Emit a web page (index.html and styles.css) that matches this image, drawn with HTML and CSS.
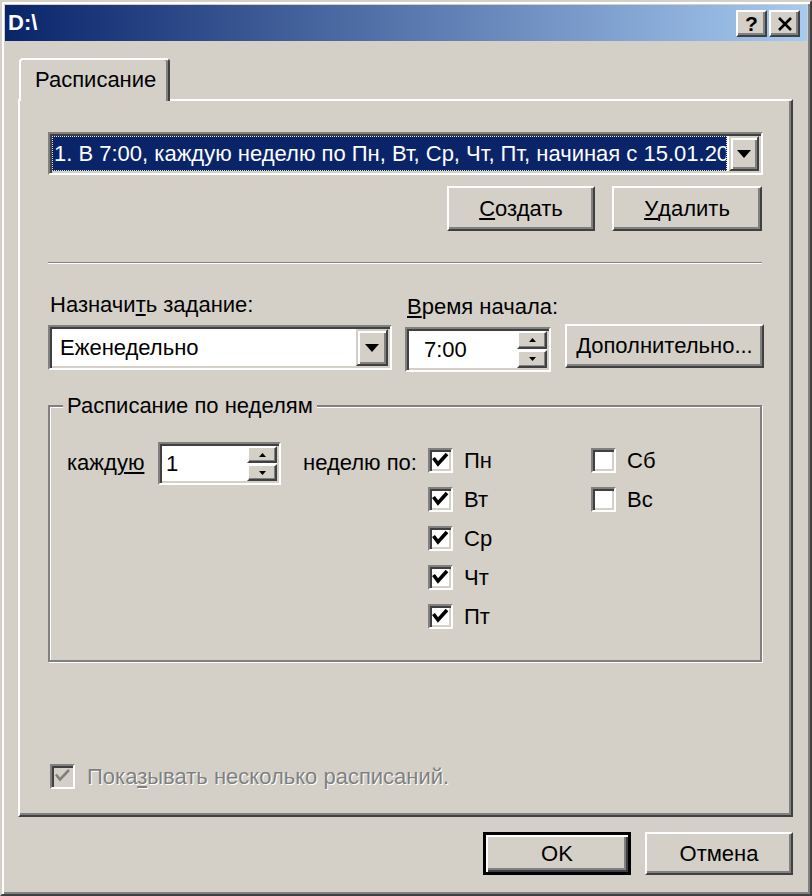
FILE: index.html
```html
<!DOCTYPE html>
<html lang="ru">
<head>
<meta charset="utf-8">
<title>D:\</title>
<link rel="stylesheet" href="styles.css">
</head>
<body>
<div class="window">
  <div class="titlebar">
    <span class="title">D:\</span>
    <div class="tb-buttons">
      <span class="tb-btn help">?</span>
      <span class="tb-btn close"><svg width="16" height="14" viewBox="0 0 16 14"><path d="M2 1 L14 13 M14 1 L2 13" stroke="#000" stroke-width="2.6" fill="none"/></svg></span>
    </div>
  </div>
  <div class="body">
    <div class="tabs"><div class="tab">Расписание</div></div>
    <div class="panel">
      <div class="combo sched">
        <div class="field sel"><span class="focus">1. В 7:00, каждую неделю по Пн, Вт, Ср, Чт, Пт, начиная с 15.01.2004</span></div>
        <div class="drop"><svg width="14" height="8" viewBox="0 0 14 8"><path d="M0 0 H14 L7 8 Z" fill="#000"/></svg></div>
      </div>
      <div class="btn-row">
        <button class="btn w148"><u>С</u>оздать</button>
        <button class="btn w150"><u>У</u>далить</button>
      </div>
      <div class="sep"></div>
      <div class="assign">
        <div class="col c1">
          <span class="lbl">Назначи<u>т</u>ь задание:</span>
          <div class="combo plain">
            <div class="field">Еженедельно</div>
            <div class="drop"><svg width="14" height="8" viewBox="0 0 14 8"><path d="M0 0 H14 L7 8 Z" fill="#000"/></svg></div>
          </div>
        </div>
        <div class="col c2">
          <span class="lbl"><u>В</u>ремя начала:</span>
          <div class="spin time">
            <div class="spin-val">7:00</div>
            <div class="spin-btns">
              <span class="sb"><svg width="7" height="4" viewBox="0 0 7 4"><path d="M0 4 H7 L3.5 0 Z" fill="#000"/></svg></span>
              <span class="sb"><svg width="7" height="4" viewBox="0 0 7 4"><path d="M0 0 H7 L3.5 4 Z" fill="#000"/></svg></span>
            </div>
          </div>
        </div>
        <button class="btn more"><u>Д</u>ополнительно...</button>
      </div>
      <fieldset class="group">
        <legend>Расписание по неделям</legend>
        <div class="group-row">
          <span class="every">кажд<u>ую</u></span>
          <div class="spin count">
            <div class="spin-val">1</div>
            <div class="spin-btns">
              <span class="sb"><svg width="7" height="4" viewBox="0 0 7 4"><path d="M0 4 H7 L3.5 0 Z" fill="#000"/></svg></span>
              <span class="sb"><svg width="7" height="4" viewBox="0 0 7 4"><path d="M0 0 H7 L3.5 4 Z" fill="#000"/></svg></span>
            </div>
          </div>
          <span class="week">неделю по:</span>
          <div class="days d1">
            <label class="chk"><span class="box"><svg width="21" height="21" viewBox="0 0 21 21"><path d="M3.5 8 L8 14 L17 4" stroke="#000" stroke-width="3.6" fill="none"/></svg></span>Пн</label>
            <label class="chk"><span class="box"><svg width="21" height="21" viewBox="0 0 21 21"><path d="M3.5 8 L8 14 L17 4" stroke="#000" stroke-width="3.6" fill="none"/></svg></span>Вт</label>
            <label class="chk"><span class="box"><svg width="21" height="21" viewBox="0 0 21 21"><path d="M3.5 8 L8 14 L17 4" stroke="#000" stroke-width="3.6" fill="none"/></svg></span>Ср</label>
            <label class="chk"><span class="box"><svg width="21" height="21" viewBox="0 0 21 21"><path d="M3.5 8 L8 14 L17 4" stroke="#000" stroke-width="3.6" fill="none"/></svg></span>Чт</label>
            <label class="chk"><span class="box"><svg width="21" height="21" viewBox="0 0 21 21"><path d="M3.5 8 L8 14 L17 4" stroke="#000" stroke-width="3.6" fill="none"/></svg></span>Пт</label>
          </div>
          <div class="days d2">
            <label class="chk"><span class="box"></span>Сб</label>
            <label class="chk"><span class="box"></span>Вс</label>
          </div>
        </div>
      </fieldset>
      <label class="chk multi"><span class="box dis"><svg width="21" height="21" viewBox="0 0 21 21"><path d="M4 8.5 L8 13.5 L17 4" stroke="#808080" stroke-width="2.6" fill="none"/></svg></span><span class="dtext">Пока<u>з</u>ывать несколько расписаний.</span></label>
    </div>
    <div class="footer">
      <button class="btn ok">OK</button>
      <button class="btn cancel">Отмена</button>
    </div>
  </div>
</div>
</body>
</html>
```
FILE: styles.css
```css
* { box-sizing: border-box; }
html, body { margin: 0; padding: 0; }
body {
  width: 812px;
  height: 896px;
  background: #d4d0c8;
  font-family: "Liberation Sans", Arial, sans-serif;
  font-size: 22px;
  color: #000;
  overflow: hidden;
}
u { text-decoration: underline; text-underline-offset: 2px; }

.window {
  width: 812px;
  height: 896px;
  background: #d4d0c8;
  border: 2px solid;
  border-color: #d4d0c8 #404040 #404040 #d4d0c8;
  box-shadow: inset 2px 2px #fff, inset -2px -2px #808080;
  padding: 3px;
  display: flex;
  flex-direction: column;
}

.titlebar {
  height: 36px;
  flex: none;
  background: linear-gradient(to right, #0a246a 0%, #a6caf0 100%);
  display: flex;
  align-items: center;
  justify-content: space-between;
  padding: 0 7px 0 3px;
}
.title {
  color: #fff;
  font-weight: bold;
  font-size: 22px;
}
.tb-buttons { display: flex; gap: 2px; margin-top: 1px; }
.tb-btn {
  width: 31px;
  height: 27px;
  background: #d4d0c8;
  border: 2px solid;
  border-color: #fff #404040 #404040 #fff;
  box-shadow: inset -2px -2px #808080;
  display: flex;
  align-items: center;
  justify-content: center;
  font-weight: bold;
  font-size: 21px;
  line-height: 1;
}

.body {
  flex: 1;
  display: flex;
  flex-direction: column;
  padding: 17px 14px 0 13px;
}

.tabs { height: 41px; flex: none; display: flex; position: relative; z-index: 2; }
.tab {
  margin-left: 1px;
  width: 151px;
  height: 43px;
  background: #d4d0c8;
  border: 2px solid;
  border-bottom: none;
  border-color: #fff #404040 #404040 #fff;
  border-radius: 4px 4px 0 0;
  box-shadow: inset -2px 0 #808080;
  padding: 7px 0 0 14px;
}

.panel {
  height: 718px;
  flex: none;
  border: 2px solid;
  border-color: #fff #404040 #404040 #fff;
  box-shadow: inset -2px -2px #808080;
  padding: 31px 28px 0 28px;
  display: flex;
  flex-direction: column;
}

/* sunken field */
.combo, .spin {
  display: flex;
  background: #fff;
  border: 2px solid;
  border-color: #808080 #fff #fff #808080;
  box-shadow: inset 2px 2px #404040, inset -2px -2px #d4d0c8;
  padding: 2px;
}
.combo .field {
  flex: 1;
  display: flex;
  align-items: center;
  overflow: hidden;
  white-space: nowrap;
  padding-left: 8px;
}
.sched { height: 43px; }
.sched .field.sel {
  padding: 0;
  margin-right: 2px;
}
.focus {
  display: flex;
  align-items: center;
  height: 100%;
  width: 100%;
  background: #0a246a;
  color: #fff;
  border: 1px dotted #e8e8b0;
  padding-left: 1px;
  overflow: hidden;
  white-space: nowrap;
}
.drop {
  width: 30px;
  flex: none;
  background: #d4d0c8;
  border: 2px solid;
  border-color: #d4d0c8 #404040 #404040 #d4d0c8;
  box-shadow: inset 2px 2px #fff, inset -2px -2px #808080;
  display: flex;
  align-items: center;
  justify-content: center;
}
.plain { height: 45px; }
.plain .drop { width: 32px; }

.btn {
  font-family: inherit;
  font-size: 22px;
  color: #000;
  background: #d4d0c8;
  border: 2px solid;
  border-color: #fff #404040 #404040 #fff;
  box-shadow: inset -2px -2px #808080;
  padding: 0;
  height: 45px;
  display: flex;
  align-items: center;
  justify-content: center;
  white-space: nowrap;
}
.btn-row {
  margin-top: 11px;
  display: flex;
  justify-content: flex-end;
  gap: 17px;
  padding-right: 1px;
}
.w148 { width: 148px; }
.w150 { width: 150px; }

.sep {
  margin-top: 31px;
  height: 2px;
  border-top: 1px solid #808080;
  border-bottom: 1px solid #fff;
  margin-right: 1px;
}

.assign {
  margin-top: 29px;
  display: flex;
  align-items: flex-end;
}
.col { display: flex; flex-direction: column; }
.lbl {
  height: 24px;
  line-height: 24px;
  margin-bottom: 8px;
  margin-left: 2px;
  white-space: nowrap;
}
.c1 { width: 344px; flex: none; }
.c2 { width: 146px; flex: none; margin-left: 13px; }
.more { width: 199px; flex: none; margin-left: 14px; height: 44px; margin-bottom: 2px; }

.spin .spin-val {
  flex: 1;
  display: flex;
  align-items: center;
}
.spin-btns {
  width: 30px;
  flex: none;
  display: flex;
  flex-direction: column;
  gap: 1px;
  background: #fff;
}
.sb {
  flex: 1;
  background: #d4d0c8;
  border: 2px solid;
  border-color: #fff #404040 #404040 #fff;
  box-shadow: inset -1px -1px #808080;
  display: flex;
  align-items: center;
  justify-content: center;
}
.time { height: 45px; margin-bottom: -2px; }
.time .spin-val { padding-left: 15px; }
.count { width: 123px; height: 43px; flex: none; }
.count .spin-val { padding-left: 4px; }

.group {
  margin: 24px 1px 0 0;
  padding: 0 0 31px 17px;
  border: 2px solid #808080;
  box-shadow: 1px 1px 0 #fff, inset 1px 1px 0 #fff;
}
.group legend {
  margin-left: -4px;
  padding: 0 4px;
  height: 24px;
  line-height: 24px;
  background: #d4d0c8;
}
.group-row {
  display: flex;
  align-items: flex-start;
  margin-top: 24px;
}
.every { margin-top: 8px; width: 80px; flex: none; }
.count { margin-left: 11px; }
.week { margin-left: 22px; margin-top: 8px; width: 125px; flex: none; white-space: nowrap; }
.days {
  display: flex;
  flex-direction: column;
  gap: 14px;
  margin-top: 6px;
}
.d1 { width: 163px; flex: none; }

.chk {
  display: flex;
  align-items: center;
  height: 25px;
  gap: 11px;
}
.box {
  width: 25px;
  height: 25px;
  flex: none;
  background: #fff;
  border: 2px solid;
  border-color: #808080 #fff #fff #808080;
  box-shadow: inset 2px 2px #404040, inset -2px -2px #d4d0c8;
  display: flex;
  align-items: center;
  justify-content: center;
}
.box svg { display: block; }
.box.dis { background: #d4d0c8; }

.multi {
  margin-top: auto;
  margin-bottom: 26px;
  margin-left: 2px;
  gap: 12px;
}
.dtext {
  color: #808080;
  text-shadow: 1px 1px 0 #fff;
}

.footer {
  margin-top: 15px;
  display: flex;
  justify-content: flex-end;
  gap: 14px;
}
.ok {
  width: 148px;
  height: 43px;
  border: 3px solid #000;
  box-shadow: inset 2px 2px #fff, inset -2px -2px #404040, inset -4px -4px #808080;
}
.cancel { width: 148px; height: 43px; }
```
